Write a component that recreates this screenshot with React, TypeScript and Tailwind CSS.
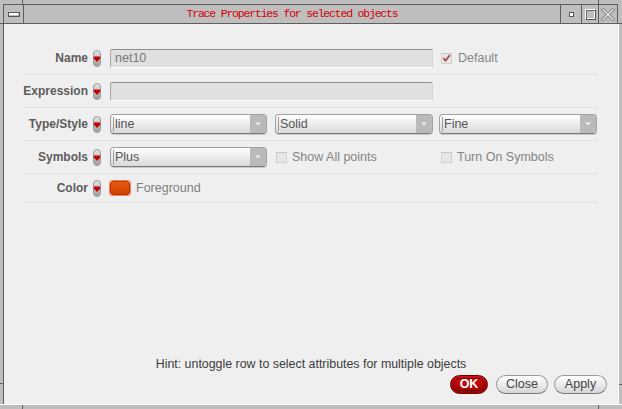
import React from 'react'

const sans = { fontFamily: '"Liberation Sans", Arial, sans-serif' }

function Toggle() {
  return (
    <svg width="8" height="17" viewBox="0 0 8 17" className="shrink-0">
      <defs>
        <linearGradient id="tg" x1="0" y1="0" x2="0" y2="1">
          <stop offset="0" stopColor="#e6e6e6" />
          <stop offset="1" stopColor="#9c9c9c" />
        </linearGradient>
      </defs>
      <rect x="0.5" y="0.5" width="7" height="16" rx="3.5" fill="url(#tg)" stroke="#9a9a9a" />
      <path d="M0.8 6.5 H7.2 V8.5 L4 12 L0.8 8.5 Z" fill="#c40000" />
    </svg>
  )
}

function Check({ checked }: { checked?: boolean }) {
  return (
    <div className="w-[11px] h-[11px] shrink-0 bg-[#e6e6e6] border border-[#d0d0d0] border-t-[#c4c4c4] flex items-center justify-center">
      {checked && (
        <svg width="10" height="10" viewBox="0 0 10 10">
          <path d="M1.5 5.2 L4 7.8 L8.8 1.6" fill="none" stroke="#b04848" strokeWidth="2" />
        </svg>
      )}
    </div>
  )
}

function Combo({ w, text }: { w: string; text: string }) {
  return (
    <div className={`${w} h-[20px] shrink-0 flex rounded-[4px] border border-[#a0a0a0] border-b-[#7c7c7c] overflow-hidden bg-gradient-to-b from-white to-[#d9d9d9] shadow-[0_1px_0_#c8c8c8]`}>
      <div className="flex-1 flex items-center pl-[2px] text-[12.5px] text-[#555]">
        <span className="border-l border-[#9a9a9a] h-[14px] leading-[14px] pl-[1px]">{text}</span>
      </div>
      <div className="w-[16px] bg-[#bababa] flex items-center justify-center">
        <svg width="6" height="4" viewBox="0 0 6 4">
          <path d="M0 0.5 H6 L3 3.5 Z" fill="#efefef" />
        </svg>
      </div>
    </div>
  )
}

function Row({ label, h = 'h-[33px]', children }: { label: string; h?: string; children?: React.ReactNode }) {
  return (
    <div className={`${h} flex items-center border-b border-[#e0e0e0]`}>
      <div className="w-[64px] shrink-0 text-right whitespace-nowrap text-[12px] font-bold text-[#5c5c5c] flex justify-end">
        {label}
      </div>
      <div className="ml-[5px] mr-[9px] flex items-center">
        <Toggle />
      </div>
      {children}
    </div>
  )
}

function PillButton({ w, children }: { w: string; children: React.ReactNode }) {
  return (
    <div className={`${w} h-[19px] rounded-full border border-[#9a9a9a] border-b-[#777] bg-gradient-to-b from-white to-[#d6d6d6] flex items-center justify-center text-[12.5px] text-[#444]`}>
      {children}
    </div>
  )
}

export default function App() {
  return (
    <div className="w-[622px] h-[409px] bg-[#bebebe] flex flex-col overflow-hidden" style={sans}>
      {/* top frame */}
      <div className="h-[4px] flex shrink-0">
        <div className="w-[23px] border-r border-[#5e5e5e]" />
        <div className="w-[576px] border-r border-[#5e5e5e]" />
      </div>

      {/* title bar */}
      <div className="h-[20px] flex shrink-0">
        <div className="w-[3px] border-b border-[#5e5e5e]" />
        <div className="flex-1 flex border border-[#5e5e5e]">
          <div className="w-[20px] border-r border-[#5e5e5e] flex items-center justify-center">
            <div className="w-[12px] h-[5px] bg-white border border-[#555] shadow-[inset_-1px_-1px_0_#bbb]" />
          </div>
          <div
            className="flex-1 border-r border-[#5e5e5e] flex items-center justify-center text-[11.5px] tracking-[-1.2px] text-[#d40000]"
            style={{ fontFamily: '"Liberation Mono", "DejaVu Sans Mono", monospace' }}
          >
            Trace Properties for selected objects
          </div>
          <div className="w-[21px] border-r border-[#5e5e5e] flex items-center justify-center">
            <div className="w-[5px] h-[5px] bg-white border border-[#555]" />
          </div>
          <div className="w-[17px] border-r border-[#5e5e5e] flex items-center justify-center">
            <div className="w-[11px] h-[11px] border border-t-white border-l-white border-r-[#555] border-b-[#555] shadow-[inset_1px_1px_0_#666,inset_-1px_-1px_0_#fff]" />
          </div>
          <div className="w-[18px] flex items-center justify-center">
            <svg width="14" height="13" viewBox="0 0 14 13">
              <path d="M2 1.5 L12 11.5 M12 1.5 L2 11.5" stroke="#8a8a8a" strokeWidth="3.4" strokeLinecap="square" />
              <path d="M2 1.5 L12 11.5 M12 1.5 L2 11.5" stroke="#e2e2e2" strokeWidth="1.4" strokeLinecap="square" />
            </svg>
          </div>
        </div>
        <div className="w-[4px] border-b border-[#5e5e5e]" />
      </div>

      {/* body */}
      <div className="h-[380px] flex shrink-0">
        <div className="w-[4px] border-r border-[#5e5e5e]">
          <div className="h-[360px] border-b border-[#5e5e5e]" />
        </div>

        <div className="w-[614px] bg-[#efefef] flex flex-col">
          <div className="ml-[20px] w-[574px] pt-[18px]">
            <Row label="Name">
              <div className="w-[323px] h-[19px] shrink-0 bg-[#e0e0e0] rounded-[2px] border border-t-[#8c8c8c] border-l-[#a8a8a8] border-r-[#d4d4d4] border-b-white flex items-center pl-[4px] text-[12.5px] text-[#7a7a7a]">
                net10
              </div>
              <div className="ml-[8px] flex items-center">
                <Check checked />
                <span className="ml-[6px] text-[12.5px] text-[#858585]">Default</span>
              </div>
            </Row>
            <Row label="Expression">
              <div className="w-[323px] h-[19px] shrink-0 bg-[#e0e0e0] rounded-[2px] border border-t-[#8c8c8c] border-l-[#a8a8a8] border-r-[#d4d4d4] border-b-white" />
            </Row>
            <Row label="Type/Style">
              <Combo w="w-[157px]" text="line" />
              <div className="ml-[8px]">
                <Combo w="w-[158px]" text="Solid" />
              </div>
              <div className="ml-[6px]">
                <Combo w="w-[158px]" text="Fine" />
              </div>
            </Row>
            <Row label="Symbols">
              <Combo w="w-[157px]" text="Plus" />
              <div className="ml-[9px] w-[165px] flex items-center">
                <Check />
                <span className="ml-[5px] text-[12.5px] text-[#858585]">Show All points</span>
              </div>
              <div className="flex items-center">
                <Check />
                <span className="ml-[5px] text-[12.5px] text-[#858585]">Turn On Symbols</span>
              </div>
            </Row>
            <Row label="Color" h="h-[29px]">
              <div className="w-[20px] h-[14px] shrink-0 rounded-[3px] bg-gradient-to-b from-[#e85a10] to-[#d04000] border border-[#b03a08] shadow-[0_0_0_1px_#f08050]" />
              <span className="ml-[6px] text-[12.5px] text-[#808080]">Foreground</span>
            </Row>
          </div>

          <div className="flex-1" />

          <div className="h-[14px] leading-[14px] text-center text-[12.4px] text-[#3c3c3c]">
            Hint: untoggle row to select attributes for multiple objects
          </div>

          <div className="mt-[4px] pb-[10px] pr-[11px] flex justify-end items-center">
            <div className="w-[38px] h-[19px] rounded-full border border-[#6a0000] bg-gradient-to-b from-[#d01010] to-[#a00000] flex items-center justify-center p-[2px]">
              <div className="w-full h-full rounded-full border border-dotted border-black flex items-center justify-center text-[12.5px] font-bold text-white">
                OK
              </div>
            </div>
            <div className="ml-[8px]">
              <PillButton w="w-[52px]">Close</PillButton>
            </div>
            <div className="ml-[6px]">
              <PillButton w="w-[53px]">Apply</PillButton>
            </div>
          </div>
        </div>

        <div className="w-[4px] border-l border-white">
          <div className="h-[361px] border-b border-[#5e5e5e]" />
        </div>
      </div>

      {/* bottom frame */}
      <div className="h-[5px] flex border-t border-white shrink-0">
        <div className="w-[23px] border-r border-[#5e5e5e]" />
        <div className="w-[576px] border-r border-[#5e5e5e]" />
      </div>
    </div>
  )
}
